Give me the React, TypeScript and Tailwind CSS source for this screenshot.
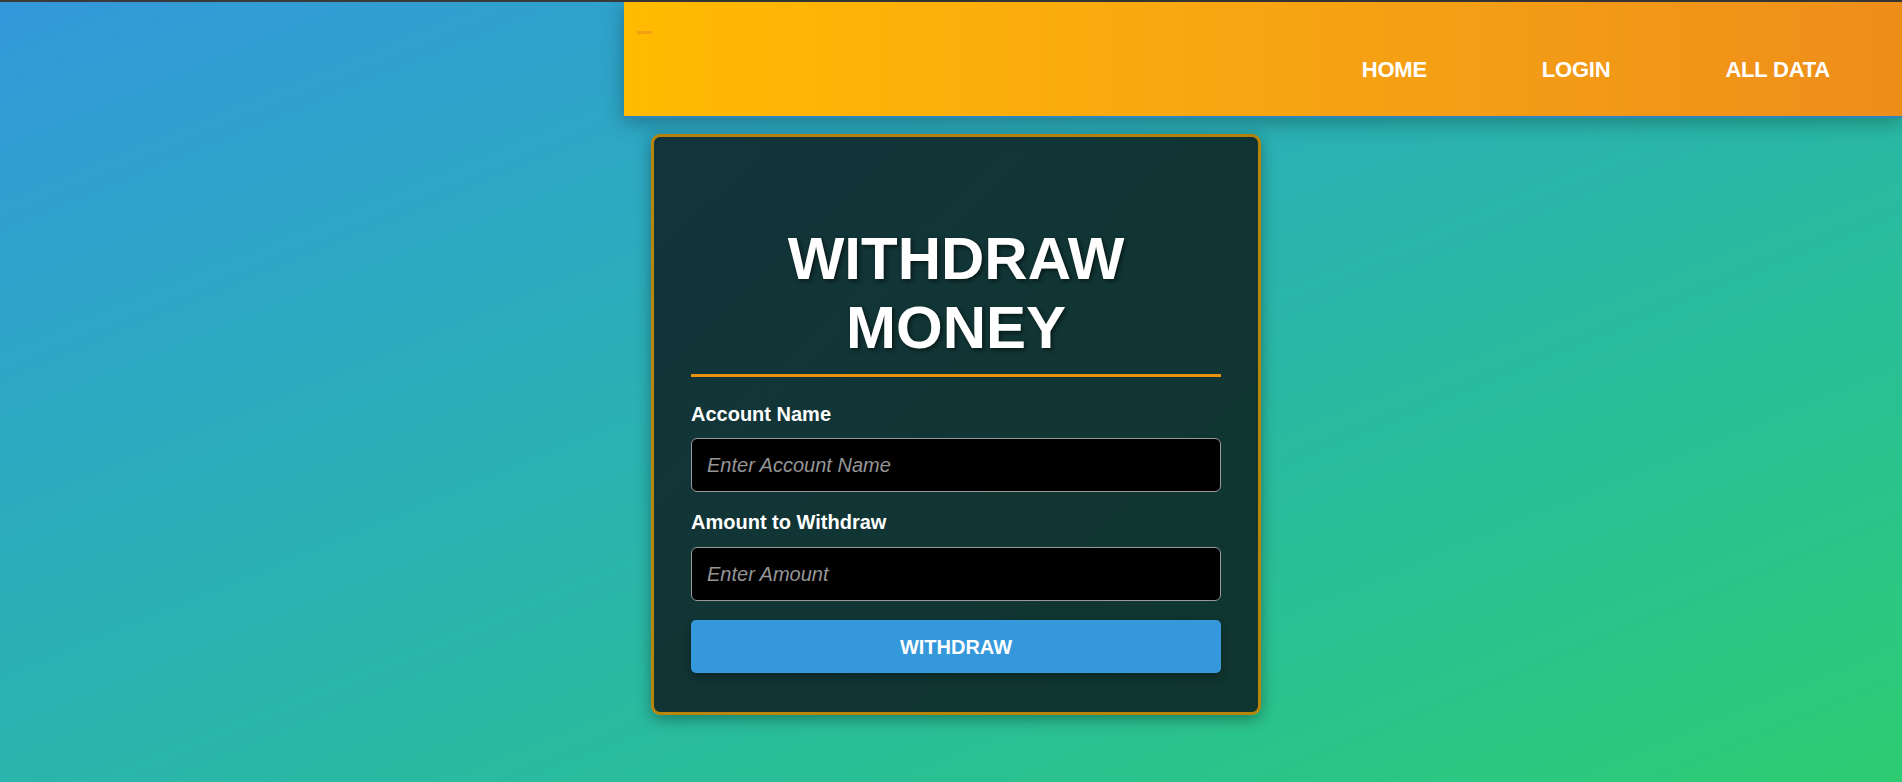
import { useState } from "react";

const links = ["HOME", "LOGIN", "ALL DATA"];

export default function App() {
  const [name, setName] = useState("");
  const [amount, setAmount] = useState("");

  return (
    <div className="min-h-screen bg-gradient-to-br from-[#3498db] to-[#2ecc71] font-['Liberation_Sans',Arial,sans-serif] text-white">
      <div className="h-[2px] bg-[#3a3a3a]" />

      <nav className="relative ml-auto flex h-[116px] w-[1278px] items-start justify-between border-b-2 border-[#2e86c1] bg-gradient-to-r from-[#ffbb00] to-[#ee8e1a] shadow-[0_4px_20px_rgba(0,0,0,0.3)]">
        <span className="ml-[13px] mt-[29px] block h-[3px] w-[15px] bg-[#f5a012]" />
        <ul className="mr-[72px] mt-[55px] flex gap-[115px]">
          {links.map((link) => (
            <li key={link}>
              <a href="#" className="text-[22px] font-bold leading-[25px] tracking-[-0.01em] text-white">
                {link}
              </a>
            </li>
          ))}
        </ul>
      </nav>

      <div className="ml-[651px] pt-4">
        <div className="w-[610px] rounded-[9px] border-[3px] border-[#b8860b] bg-gradient-to-br from-[#13343b] to-[#0f362e] px-[37px] pb-[39px] pt-[37px] shadow-[0_4px_15px_rgba(0,0,0,0.35)]">
          <h1 className="mt-[50px] text-center text-[60px] font-bold leading-[69px] [text-shadow:2px_2px_4px_rgba(0,0,0,0.55)]">
            WITHDRAW
            <br />
            MONEY
          </h1>
          <div className="mt-3 h-[3px] bg-[#e8930f]" />

          <label className="mt-[26px] block text-[20px] font-bold leading-[23px]">Account Name</label>
          <input
            value={name}
            onChange={(e) => setName(e.target.value)}
            placeholder="Enter Account Name"
            className="mt-3 block h-[54px] w-full rounded-md border border-[#9a9a9a] bg-black px-[15px] text-[20px] text-white placeholder:italic placeholder:text-[#959595] focus:outline-none"
          />

          <label className="mt-[19px] block text-[20px] font-bold leading-[23px]">Amount to Withdraw</label>
          <input
            value={amount}
            onChange={(e) => setAmount(e.target.value)}
            placeholder="Enter Amount"
            className="mt-[13px] block h-[54px] w-full rounded-md border border-[#9a9a9a] bg-black px-[15px] text-[20px] text-white placeholder:italic placeholder:text-[#959595] focus:outline-none"
          />

          <button
            type="button"
            className="mt-[19px] block h-[53px] w-full rounded-[5px] bg-[#3498db] text-[20px] font-bold text-white shadow-[0_4px_10px_rgba(0,0,0,0.3)]"
          >
            WITHDRAW
          </button>
        </div>
      </div>
    </div>
  );
}
